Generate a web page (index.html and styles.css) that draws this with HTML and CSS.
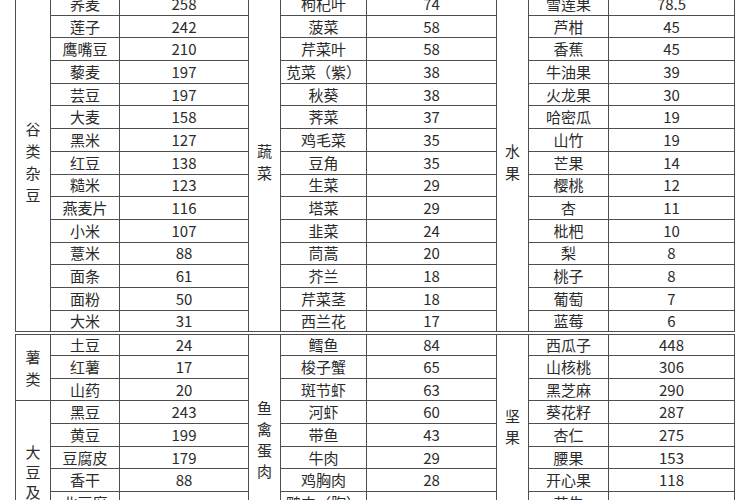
FILE: index.html
```html
<!DOCTYPE html>
<html lang="zh-CN">
<head>
<meta charset="utf-8">
<title>常见食物嘌呤含量表</title>
<link rel="stylesheet" href="styles.css">
</head>
<body>
<table class="purine">
  <colgroup>
    <col class="col-cat1"><col class="col-food1"><col class="col-val1">
    <col class="col-cat2"><col class="col-food2"><col class="col-val2">
    <col class="col-cat3"><col class="col-food3"><col class="col-val3">
  </colgroup>
  <tbody>
    <tr>
      <td class="cat" rowspan="15"><div class="label">谷类杂豆</div></td><td>荞麦</td><td>258</td>
      <td class="cat" rowspan="15"><div class="label">蔬菜</div></td><td>枸杞叶</td><td>74</td>
      <td class="cat" rowspan="15"><div class="label">水果</div></td><td>雪莲果</td><td>78.5</td>
    </tr>
    <tr><td>莲子</td><td>242</td><td>菠菜</td><td>58</td><td>芦柑</td><td>45</td></tr>
    <tr><td>鹰嘴豆</td><td>210</td><td>芹菜叶</td><td>58</td><td>香蕉</td><td>45</td></tr>
    <tr><td>藜麦</td><td>197</td><td>苋菜（紫）</td><td>38</td><td>牛油果</td><td>39</td></tr>
    <tr><td>芸豆</td><td>197</td><td>秋葵</td><td>38</td><td>火龙果</td><td>30</td></tr>
    <tr><td>大麦</td><td>158</td><td>荠菜</td><td>37</td><td>哈密瓜</td><td>19</td></tr>
    <tr><td>黑米</td><td>127</td><td>鸡毛菜</td><td>35</td><td>山竹</td><td>19</td></tr>
    <tr><td>红豆</td><td>138</td><td>豆角</td><td>35</td><td>芒果</td><td>14</td></tr>
    <tr><td>糙米</td><td>123</td><td>生菜</td><td>29</td><td>樱桃</td><td>12</td></tr>
    <tr><td>燕麦片</td><td>116</td><td>塔菜</td><td>29</td><td>杏</td><td>11</td></tr>
    <tr><td>小米</td><td>107</td><td>韭菜</td><td>24</td><td>枇杷</td><td>10</td></tr>
    <tr><td>薏米</td><td>88</td><td>茼蒿</td><td>20</td><td>梨</td><td>8</td></tr>
    <tr><td>面条</td><td>61</td><td>芥兰</td><td>18</td><td>桃子</td><td>8</td></tr>
    <tr><td>面粉</td><td>50</td><td>芹菜茎</td><td>18</td><td>葡萄</td><td>7</td></tr>
    <tr><td>大米</td><td>31</td><td>西兰花</td><td>17</td><td>蓝莓</td><td>6</td></tr>

    <tr class="section-start">
      <td class="cat" rowspan="3"><div class="label">薯类</div></td><td>土豆</td><td>24</td>
      <td class="cat cat-top cat-meat" rowspan="8"><div class="label label-tight">鱼禽蛋肉</div></td><td>鳕鱼</td><td>84</td>
      <td class="cat cat-top cat-nut" rowspan="8"><div class="label label-tight">坚果</div></td><td>西瓜子</td><td>448</td>
    </tr>
    <tr><td>红薯</td><td>17</td><td>梭子蟹</td><td>65</td><td>山核桃</td><td>306</td></tr>
    <tr><td>山药</td><td>20</td><td>斑节虾</td><td>63</td><td>黑芝麻</td><td>290</td></tr>
    <tr>
      <td class="cat cat-top cat-soy" rowspan="5"><div class="label label-soy">大豆及其制品</div></td><td>黑豆</td><td>243</td>
      <td>河虾</td><td>60</td><td>葵花籽</td><td>287</td>
    </tr>
    <tr><td>黄豆</td><td>199</td><td>带鱼</td><td>43</td><td>杏仁</td><td>275</td></tr>
    <tr><td>豆腐皮</td><td>179</td><td>牛肉</td><td>29</td><td>腰果</td><td>153</td></tr>
    <tr><td>香干</td><td>88</td><td>鸡胸肉</td><td>28</td><td>开心果</td><td>118</td></tr>
    <tr><td>北豆腐</td><td></td><td>鸭肉（胸）</td><td></td><td>花生</td><td></td></tr>
  </tbody>
</table>
</body>
</html>
```

FILE: styles.css
```css
html, body {
  margin: 0;
  padding: 0;
  height: 100%;
  overflow: hidden;
  background: #ffffff;
}

body {
  font-family: "Noto Sans CJK SC", "Liberation Sans", sans-serif;
  font-size: 15px;
  color: #2b2b2b;
}

.purine {
  border-collapse: collapse;
  table-layout: fixed;
  width: 719px;
  margin: -8px 0 0 15px;
}

.col-cat1 { width: 35px; }
.col-food1 { width: 69px; }
.col-val1 { width: 129px; }
.col-cat2 { width: 32px; }
.col-food2 { width: 86px; }
.col-val2 { width: 130px; }
.col-cat3 { width: 32px; }
.col-food3 { width: 80px; }
.col-val3 { width: 126px; }

.purine tr {
  height: 22.7px;
}

.purine td {
  border: 1px solid #4f4f4f;
  padding: 0;
  text-align: center;
  vertical-align: middle;
  line-height: 20px;
  white-space: nowrap;
  overflow: hidden;
}

.purine .section-start td {
  border-top: 4px double #4f4f4f;
}

.purine td.cat {
  white-space: normal;
}

.label {
  width: 1em;
  margin: 0 auto;
  line-height: 22px;
}

.label-tight {
  line-height: 21px;
}

.purine td.cat-top {
  vertical-align: top;
}

.purine td.cat-meat {
  padding-top: 62px;
}

.purine td.cat-nut {
  padding-top: 70px;
}

.purine td.cat-soy {
  padding-top: 41px;
}

.label-soy {
  line-height: 20px;
  height: 60px;
  overflow: hidden;
}
```
